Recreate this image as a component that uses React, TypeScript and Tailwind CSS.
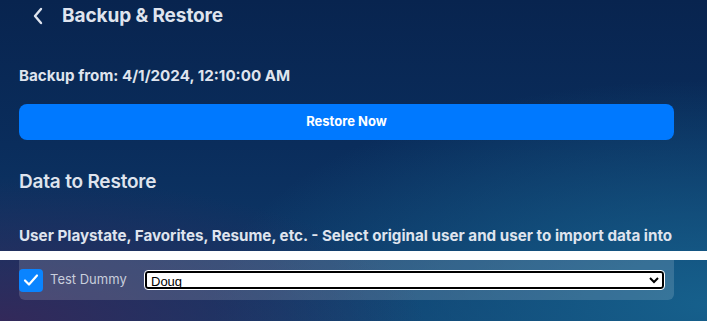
import React from 'react';

const App = () => {
    return (
        <div
            className="w-full h-[321px] overflow-hidden text-[#dfe4ee] bg-[radial-gradient(ellipse_60%_45%_at_0%_100%,#33295a_0%,rgba(51,41,90,0)_100%),radial-gradient(ellipse_70%_70%_at_100%_95%,#16608c_0%,rgba(22,96,140,0)_100%),linear-gradient(180deg,#08244f_0%,#0a2d5c_45%,#0f3c6c_100%)]"
            style={{ fontFamily: 'Inter, "Noto Sans", sans-serif' }}
        >
            {/* header */}
            <div className="flex items-center h-[32px] pl-[32px]">
                <svg width="12" height="18" viewBox="0 0 12 18" fill="none" className="mr-[18px]">
                    <path d="M9 2 L3 9 L9 16" stroke="#dfe4ee" strokeWidth="2.4" strokeLinecap="round" strokeLinejoin="round" />
                </svg>
                <h1 className="text-[19px] font-bold tracking-[-0.1px]">Backup &amp; Restore</h1>
            </div>

            <div className="px-[19px] pr-[33px]">
                <p className="mt-[34px] text-[15.2px] font-bold leading-[20px]">Backup from: 4/1/2024, 12:10:00 AM</p>

                <button className="mt-[18px] w-full h-[36px] rounded-[8px] bg-[#0079ff] text-white text-[13px] font-bold">
                    Restore Now
                </button>

                <h2 className="mt-[30px] text-[19px] font-semibold leading-[24px] tracking-[-0.2px]">Data to Restore</h2>

                <p className="mt-[32px] text-[15.2px] font-bold leading-[20px] whitespace-nowrap">
                    User Playstate, Favorites, Resume, etc. - Select original user and user to import data into
                </p>
            </div>

            <div className="mt-[5px] h-[9px] bg-white" />

            <div className="px-[19px] pr-[33px]">
                <div className="flex items-center h-[40px] bg-white/15 rounded-b-[6px] pr-[10px]">
                    <div className="w-[24px] h-[23px] rounded-[4px] bg-[#0a84ff] flex items-center justify-center">
                        <svg width="16" height="14" viewBox="0 0 16 14" fill="none">
                            <path d="M2 7.5 L6 11.5 L14 2.5" stroke="white" strokeWidth="2.2" strokeLinecap="round" strokeLinejoin="round" />
                        </svg>
                    </div>
                    <span className="ml-[7px] w-[95px] text-[13px] text-[#c9cfdc]">Test Dummy</span>
                    <select
                        className="flex-1 h-[18px] bg-white text-black border-2 border-black rounded-[3px] text-[13px] leading-[14px] outline outline-1 outline-white"
                        style={{ fontFamily: '"Liberation Sans", Arial, sans-serif' }}
                        defaultValue="Doug"
                    >
                        <option>Doug</option>
                        <option>Test Dummy</option>
                    </select>
                </div>
            </div>
        </div>
    );
};

export default App;
